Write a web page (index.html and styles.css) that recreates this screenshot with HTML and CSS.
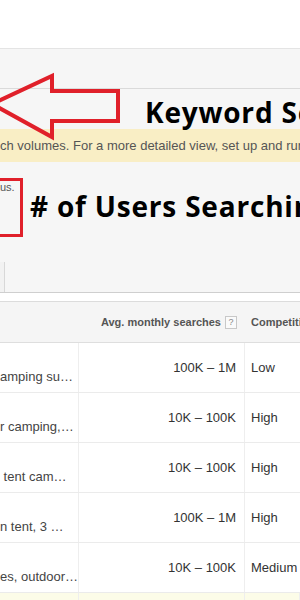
FILE: index.html
```html
<!DOCTYPE html>
<html lang="en">
<head>
  <meta charset="UTF-8">
  <title>Keyword Planner</title>
  <link rel="stylesheet" href="styles.css">
</head>
<body>

  <div class="page">
    <div class="top-space"></div>

    <div class="toolbar"></div>

    <div class="title-bar">
      <h1 class="callout">Keyword Search Volume</h1>
    </div>

    <div class="notice">ch volumes. For a more detailed view, set up and run a campaign.</div>

    <div class="panel">
      <p class="panel-note">us.</p>
      <h2 class="callout callout-users"># of Users Searching</h2>
      <div class="tabs">
        <div class="tab"></div>
      </div>
    </div>

    <div class="gap"></div>

    <div class="results">
      <div class="row head">
        <div class="cell"></div>
        <div class="cell num">Avg. monthly searches <span class="help">?</span></div>
        <div class="cell comp">Competition</div>
      </div>
      <div class="row">
        <div class="cell group">amping su…</div>
        <div class="cell num">100K – 1M</div>
        <div class="cell comp">Low</div>
      </div>
      <div class="row">
        <div class="cell group">r camping,…</div>
        <div class="cell num">10K – 100K</div>
        <div class="cell comp">High</div>
      </div>
      <div class="row">
        <div class="cell group">&nbsp;tent cam…</div>
        <div class="cell num">10K – 100K</div>
        <div class="cell comp">High</div>
      </div>
      <div class="row">
        <div class="cell group">n tent, 3 …</div>
        <div class="cell num">100K – 1M</div>
        <div class="cell comp">High</div>
      </div>
      <div class="row">
        <div class="cell group">es, outdoor…</div>
        <div class="cell num">10K – 100K</div>
        <div class="cell comp">Medium</div>
      </div>
      <div class="row selected">
        <div class="cell"></div>
        <div class="cell"></div>
        <div class="cell"></div>
      </div>
    </div>

    <!-- red annotations drawn over the screenshot -->
    <svg class="arrow" width="130" height="80" viewBox="0 0 130 80">
      <polygon points="-8,32 52,4 52,19 118,19 118,49 52,49 52,65" fill="none" stroke="#e0202a" stroke-width="4" stroke-linejoin="miter"/>
    </svg>
    <div class="box"></div>
  </div>

</body>
</html>
```

FILE: styles.css
```css
body {
  margin: 0;
  font-family: "Liberation Sans", Arial, sans-serif;
  color: #444;
  background-color: #fff;
}
.page {
  position: relative;
  width: 300px;
  height: 600px;
  overflow: hidden;
}
.top-space {
  height: 48px;
}
.toolbar {
  height: 39px;
  background-color: #f6f6f6;
  border-top: 1px solid #e4e4e4;
  border-bottom: 1px solid #dadada;
}
.title-bar {
  height: 40px;
  background-color: #f6f6f6;
}
.callout {
  margin: 0;
  font-family: "Open Sans", Lato, sans-serif;
  font-weight: 700;
  font-size: 28px;
  letter-spacing: 0.8px;
  color: #000;
  white-space: nowrap;
}
.title-bar .callout {
  padding-left: 145px;
  line-height: 40px;
  padding-top: 3px;
}
.notice {
  height: 33px;
  line-height: 33px;
  background-color: #f9eec5;
  font-size: 13px;
  color: #555;
  white-space: nowrap;
}
.panel {
  height: 130px;
  background-color: #f6f6f6;
  border-bottom: 1px solid #cfcfcf;
  display: flex;
  flex-direction: column;
}
.panel-note {
  margin: 0;
  padding-top: 19px;
  font-size: 11px;
  line-height: 12px;
  color: #555;
}
.callout-users {
  padding-left: 30px;
  margin-top: -4px;
  line-height: 34px;
}
.tabs {
  margin-top: auto;
  height: 30px;
}
.tab {
  width: 4px;
  height: 30px;
  border-right: 1px solid #d8d8d8;
  background-color: #f2f2f2;
}
.gap {
  height: 8px;
}
.results {
  border-top: 1px solid #dcdcdc;
}
.row {
  display: grid;
  grid-template-columns: 79px 166px 1fr;
  box-sizing: border-box;
  height: 50px;
  border-bottom: 1px solid #ebebeb;
  font-size: 13px;
  color: #333;
  white-space: nowrap;
}
.row.head {
  height: 41px;
  background-color: #f5f5f5;
  border-bottom: 1px solid #dedede;
  font-size: 11px;
  font-weight: bold;
  color: #555;
}
.row.selected {
  background-color: #fcfce8;
}
.cell {
  border-right: 1px solid #eeeeee;
  display: flex;
  align-items: center;
  overflow: hidden;
}
.head .cell {
  border-right: none;
}
.cell.group {
  align-items: flex-start;
  padding-top: 26px;
  color: #444;
}
.cell.num {
  justify-content: flex-end;
  padding-right: 8px;
}
.cell.comp {
  padding-left: 6px;
  border-right: none;
}
.help {
  display: inline-block;
  width: 10px;
  height: 11px;
  margin-left: 4px;
  border: 1px solid #c8c8c8;
  background-color: #fafafa;
  font-size: 9px;
  font-weight: normal;
  line-height: 11px;
  text-align: center;
  color: #888;
}
.arrow {
  position: absolute;
  left: 0;
  top: 72px;
}
.box {
  position: absolute;
  left: -10px;
  top: 178px;
  width: 27px;
  height: 53px;
  border: 3px solid #e0202a;
}
```
